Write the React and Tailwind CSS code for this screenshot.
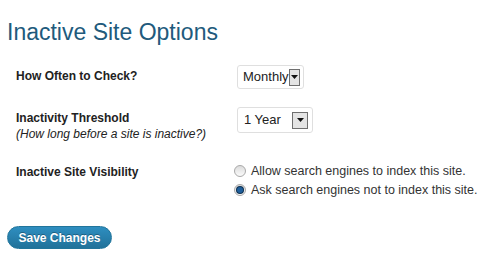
import React, { useState } from 'react';

// Classic WP-style dropdown arrow button
function ArrowBox() {
  return (
    <div className="flex h-[17px] w-[16px] items-center justify-center border border-[#6f6f6f] bg-[#e4e4e4]">
      <svg width="7" height="4" viewBox="0 0 7 4">
        <path d="M0 0h7L3.5 4z" fill="#111" />
      </svg>
    </div>
  );
}

function Radio({ checked, onClick }) {
  return (
    <span
      onClick={onClick}
      className="flex h-[12px] w-[12px] items-center justify-center rounded-full border border-[#a9a9a9] bg-gradient-to-b from-[#dcdcdc] to-[#fbfbfb] cursor-pointer"
    >
      {checked && (
        <span className="h-[6px] w-[6px] rounded-full bg-[#1f5f9c] shadow-[0_0_0_1px_#0e2f4e]" />
      )}
    </span>
  );
}

export default function App() {
  const [visibility, setVisibility] = useState('block');

  return (
    <div className="min-h-screen bg-white pl-[7px] pt-[18px] text-[#222] font-['Liberation_Sans',Arial,sans-serif]">
      <h2 className="text-[23px] leading-[29px] text-[#215a7c]">Inactive Site Options</h2>

      <div className="mt-[18px] pl-[9px] text-[12px] leading-[16px]">
        {/* How often */}
        <div className="flex">
          <div className="w-[221px] pt-[3px] font-bold">How Often to Check?</div>
          <div className="flex h-[24px] w-[67px] items-center justify-between rounded-[3px] border border-[#dfdfdf] bg-white pl-[5px] pr-[3px]">
            <span className="text-[13px]">Monthly</span>
            <ArrowBox />
          </div>
        </div>

        {/* Threshold */}
        <div className="mt-[18px] flex">
          <div className="w-[221px] pt-[3px]">
            <div className="font-bold">Inactivity Threshold</div>
            <div className="italic">(How long before a site is inactive?)</div>
          </div>
          <div className="flex h-[26px] w-[76px] items-center justify-between rounded-[3px] border border-[#dfdfdf] bg-white pl-[6px] pr-[4px]">
            <span className="text-[13px]">1 Year</span>
            <ArrowBox />
          </div>
        </div>

        {/* Visibility */}
        <div className="mt-[21px] flex">
          <div className="w-[221px] pt-[1px] font-bold">Inactive Site Visibility</div>
          <div className="-ml-[3px] flex flex-col gap-[3px] text-[12.5px] text-[#333]">
            <label className="flex items-center gap-[5px]">
              <Radio checked={visibility === 'allow'} onClick={() => setVisibility('allow')} />
              <span>Allow search engines to index this site.</span>
            </label>
            <label className="flex items-center gap-[5px]">
              <Radio checked={visibility === 'block'} onClick={() => setVisibility('block')} />
              <span>Ask search engines not to index this site.</span>
            </label>
          </div>
        </div>
      </div>

      <button className="mt-[28px] h-[23px] w-[105px] rounded-full border border-[#21759b] bg-gradient-to-b from-[#2e8ec0] to-[#21729a] text-[12px] font-bold text-white [text-shadow:0_-1px_0_rgba(0,0,0,0.3)]">
        Save Changes
      </button>
    </div>
  );
}
